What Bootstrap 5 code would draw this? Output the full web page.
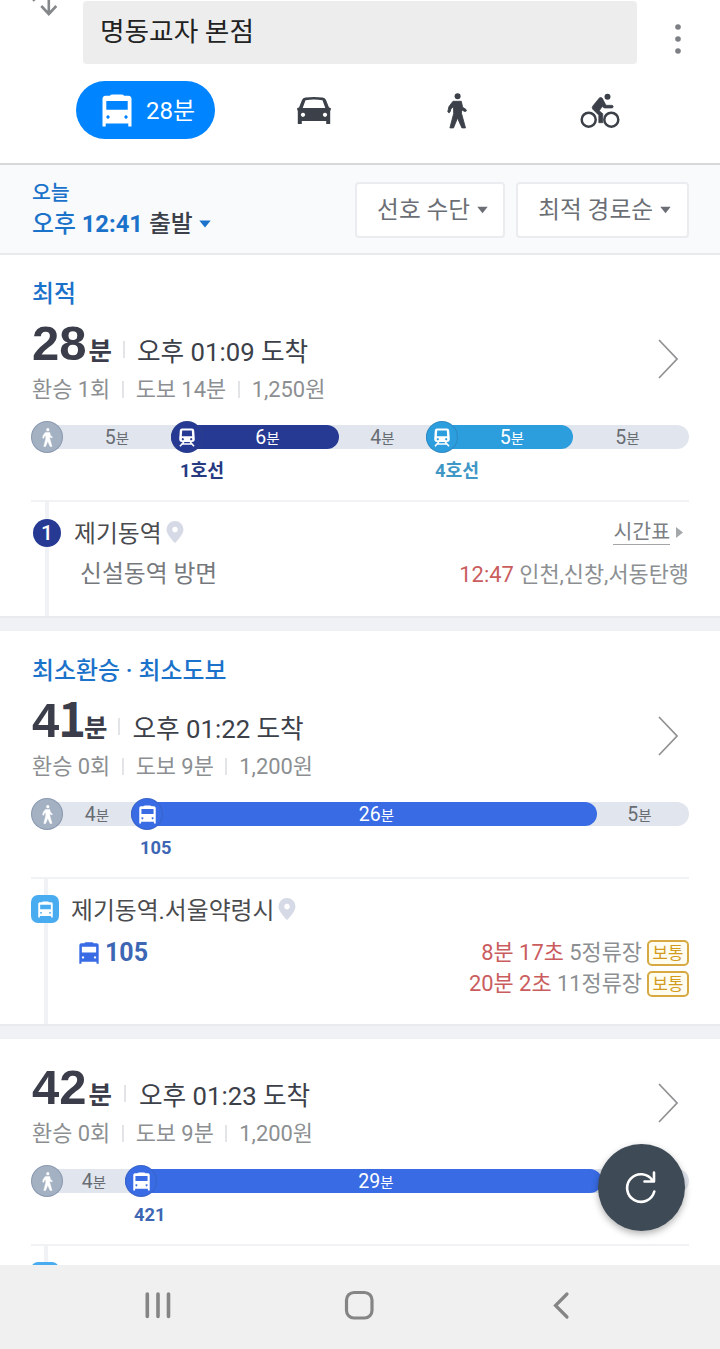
<!DOCTYPE html>
<html lang="ko">
<head>
<meta charset="utf-8">
<meta name="viewport" content="width=device-width, initial-scale=1">
<title>길찾기</title>
<link href="https://cdn.jsdelivr.net/npm/bootstrap@5.3.0/dist/css/bootstrap.min.css" rel="stylesheet">
<style>
body{font-family:Roboto,"Noto Sans CJK KR",sans-serif;color:#3c4049;height:1349px;overflow:hidden;line-height:1;white-space:nowrap}
svg{display:block;flex:none}
.topbar{height:165px;border-bottom:2px solid #d6d8da;flex:none}
.place{width:554px;height:63px;margin:1px 0 0 18px;background:#ededed;border-radius:4px;font-size:26.7px;line-height:62px;padding-left:17px;color:#222}
.dots{margin-left:35px}
.tabs-row{margin:17px 0 0 76px;height:58px}
.mode-on{width:139px;background:#0084ff;border-radius:29px;color:#fff;font-size:24px;margin-right:27px;padding:2px 0 0 26px;gap:14px}
.mode-on svg{margin-top:-2px}
.mode{width:143px;padding-top:1px;color:#3c4149}
.filters{height:90px;background:#f8fafc;border-bottom:2px solid #e8eaed;padding:2px 31px 0 32px;flex:none}
.depart{font-size:23.8px;font-weight:500;line-height:31px;margin-top:-3px}
.depart svg{margin-left:6px}
.blue{color:#1b72ca}
.today{font-size:20.5px}
.pick{height:56px;border:2px solid #eaecef;border-radius:4px;background:#fff;font-size:23.7px;color:#6b6f75;padding:0 15px 0 20px;gap:7px}
.pick span{padding-top:2px}
.pick + .pick{margin-left:11px;padding-right:16px}
.route{padding:22px 31px 0;background:#fff}
.route-last{padding-top:14px}
.kind{height:32px;line-height:35px;font-size:23.9px;font-weight:500;color:#1b72ca;padding-left:1px}
.total{height:64px;padding:0 11px 0 1px}
.mins{font:700 49px/52px "Liberation Sans",sans-serif;color:#3b3e4a;padding-top:3px}
.mins .one{font-family:"Noto Sans CJK KR",sans-serif;font-size:47px;line-height:1;margin:0 -4px 0 -1px}
.mins small{font-family:"Noto Sans CJK KR",sans-serif;font-size:25.5px;line-height:1;margin-left:2px}
.total .vbar{margin:16px 12px 0 11px}
.route-last .total .vbar{margin:16px 13px 0 12px}
.arrive{font-size:25.7px;line-height:32px;padding-top:21px}
.total svg{margin-top:36px}
.vbar{width:2px;height:17px;background:#e2e4e7}
.summary{height:32px;font-size:21.9px;color:#8c8f92;padding:2px 0 0 1px}
.summary .vbar{margin:-2px 12px 0 11.5px}
.track{position:relative;margin-top:16px;height:64px;padding-bottom:15px;box-sizing:content-box;border-bottom:2px solid #f0f2f4}
.track::before{content:"";position:absolute;left:8px;right:0;top:4px;height:24px;border-radius:12px;background:#e1e5ed}
.seg{position:relative;flex:none}
.leg{height:24px;margin:4px 0;border-radius:0 12px 12px 0;font-size:19.5px;line-height:25px;color:#686c73}
.leg small{font-size:14.5px}
.leg span{flex:1;text-align:center}
.ride .leg{color:#fff;background:var(--c);border-radius:12px}
.ride .leg span{padding-right:7px}
.tail .leg span{padding-right:7px}
.dot{width:32px;height:32px;border-radius:50%;border:1px solid rgba(60,80,120,.25);background:var(--c,#a3b1c3);color:#fff;margin:-4px 0;display:flex;align-items:center;justify-content:center;flex:none}
.line-name{font-size:18.3px;font-weight:700;line-height:35px;height:32px;color:var(--t);padding-left:9px}
.l1{--c:#263a94;--t:#263a82}
.l4{--c:#2c9ddd;--t:#3f97c6}
.bus{--c:#386be4;--t:#3d66b4}
.stop{position:relative;padding-top:8px}
.stop::before{content:"";position:absolute;left:14px;top:0;bottom:0;width:4px;background:#f0f2f5}
.stop-bus::before{left:13px}
.stop-row{position:relative;height:44px;font-size:23.8px;color:#4a4b4e}
.stop-row .name{padding-top:5px}
.stop-row .name + svg{margin-left:4px}
.num{width:28px;height:28px;border-radius:50%;background:#263a94;color:#fff;font-size:21px;font-weight:500;line-height:29px;text-align:center;margin:1px 13px 0 2px}
.sq{width:28px;height:28px;border-radius:7px;background:#4aacf0;color:#fff;margin-right:12px;display:flex;align-items:center;justify-content:center}
.info{line-height:31px;font-size:21.9px;color:#8c8f92;padding:5px 0 0 49px}
.stop-bus .info{padding:6px 0 0 48px}
.toward{font-size:23.8px;color:#75787c}
.red{color:#ca5c5e}
.tt{font-size:20.5px;line-height:24px;border-bottom:1px solid #a3a5a8;color:#7c7f83}
.tt-arrow{margin:0 5px 0 6px}
.crowd{width:42px;height:26px;border:2px solid #d7a943;border-radius:5px;background:#fffdf0;color:#d39b1e;font-size:16.8px;line-height:23px;text-align:center;margin-left:5px}
.busno{font-size:25px;font-weight:700;color:#3d66b4;gap:6px}
.divider{height:15px;background:#f0f1f4;border-top:2px solid #e8eaed}
.divider-first{margin-bottom:1px}
.fab{position:absolute;left:598px;top:1144px;width:87px;height:87px;border-radius:50%;background:#3e4a56;box-shadow:0 3px 7px rgba(0,0,0,.3)}
.sysnav{position:absolute;left:0;right:0;bottom:0;height:84px;background:#f0f0f0;padding:0 57px 4px}
</style>
</head>
<body class="bg-white position-relative">
<svg width="0" height="0" class="position-absolute">
  <symbol id="bus" viewBox="0 0 30 33"><path fill="currentColor" fill-rule="evenodd" d="M8 1.800Q8 .5 11 .5h8q3 0 3 1.300h4.500Q29.500 2 29.500 5v27.500h-3.200v-3H3.700v3H.5V5Q.5 2 3.500 1.800zM4.300 7v8.800h21.400V7zM6 21.300a1.700 1.700 0 1 0 .01 0zM24 21.300a1.700 1.700 0 1 0 .01 0z"/></symbol>
  <symbol id="walk" viewBox="0 0 20 36"><circle cx="10.600" cy="3.200" r="3" fill="currentColor"/><path fill="currentColor" stroke="currentColor" stroke-width=".9" stroke-linejoin="round" d="M6 8.300h8.300l1.300 5.900 3.400 2.300q.8.800.2 1.600-.6.700-1.500.4L14.500 16.800v3.700l4 14.400h-3.600L10.500 25 6.500 34.900H2.900L6.700 20.500 6.500 13.500l-2.600 2.400-.9 3.200q-.6.800-1.400.5-1-.4-.7-1.400l1.100-4.700z"/></symbol>
  <symbol id="train" viewBox="0 0 18 19"><path fill="currentColor" fill-rule="evenodd" d="M4 .5h10Q16 .5 16.200 2.500l.6 8.500q0 3-2.800 3H4Q1.200 14 1.200 11l.6-8.500Q2 .5 4 .5zM4.200 2.600l-.4 5.700h10.400l-.4-5.700zM4.800 10.100a1.100 1.100 0 1 0 .01 0zM13.200 10.100a1.100 1.100 0 1 0 .01 0z"/><path d="M5.800 14 2 18.200M12.200 14l3.800 4.200M4.500 16h9" fill="none" stroke="currentColor" stroke-width="1.700"/></symbol>
  <symbol id="pin" viewBox="0 0 18 22"><path fill="#d6dae6" fill-rule="evenodd" d="M9 0a8.500 8.500 0 0 1 8.500 8.500C17.500 14 9 22 9 22S.5 14 .5 8.500A8.500 8.500 0 0 1 9 0zM9 5.800a2.800 2.800 0 1 0 .01 0z"/></symbol>
  <symbol id="next" viewBox="0 0 20 40"><path d="M1 1l18 19L1 39" fill="none" stroke="#8f9193" stroke-width="1.700"/></symbol>
  <symbol id="down" viewBox="0 0 12 8"><path d="M.3.500h11.400L6 7.500z" fill="currentColor"/></symbol>
</svg>

<header class="topbar">
  <div class="d-flex">
    <svg width="65" height="64" fill="none" stroke="#85888b" stroke-width="2.600"><path d="M48.800-3v17M41.300 6l7.500 8 7.500-8M32.500-2l2 3"/></svg>
    <div class="place">명동교자 본점</div>
    <svg class="dots" width="12" height="64" fill="#7c7f83"><circle cx="6" cy="27" r="2.800"/><circle cx="6" cy="39" r="2.800"/><circle cx="6" cy="51" r="2.800"/></svg>
  </div>
  <nav class="tabs-row d-flex">
    <div class="mode-on d-flex align-items-center"><svg width="30" height="33"><use href="#bus"/></svg><span>28분</span></div>
    <div class="mode d-flex align-items-center justify-content-center"><svg width="34" height="28" viewBox="0 0 34 28"><path fill="#3c4149" fill-rule="evenodd" d="M8.500.6Q17-.5 25.500.6q2.700.3 3.500 2.400l3 7.500 1.800.4v2.300l-.6.400v13.400h-4V24H4.800v3H.8V13.600l-.6-.4v-2.300l1.800-.4L5 3q.8-2.100 3.500-2.400zM8.500 3.200 5.700 11h22.600L25.500 3.200Q17 2 8.500 3.200zM6 15.700a2.100 2.100 0 1 0 .01 0zM28 15.700a2.100 2.100 0 1 0 .01 0z"/></svg></div>
    <div class="mode d-flex align-items-center justify-content-center"><svg width="20" height="36"><use href="#walk"/></svg></div>
    <div class="mode d-flex align-items-center justify-content-center"><svg width="40" height="36" viewBox="0 0 40 36"><g fill="none" stroke="#3c4149" stroke-width="2.500"><circle cx="8.700" cy="26.700" r="7"/><circle cx="31.300" cy="26.700" r="7"/></g><circle cx="27.500" cy="3.800" r="3" fill="#3c4149"/><path fill="#3c4149" stroke="#3c4149" stroke-width=".7" d="M19.500 4.800q1.500-.8 2.700.3l3.800 7.200h6q1.200.3 1.200 1.400T32 15h-7.500l-2.300-1.400-2.900 4.200 3.500 3v8.900h-4v-7.500l-6-6q-1.300-1.500 0-3.200z"/></svg></div>
  </nav>
</header>

<section class="filters d-flex align-items-center">
  <div class="depart me-auto">
    <div class="today blue">오늘</div>
    <div class="d-flex align-items-center"><span class="blue">오후 <b>12:41</b></span>&nbsp;<span>출발</span><svg class="blue" width="12" height="8"><use href="#down"/></svg></div>
  </div>
  <div class="pick d-flex align-items-center"><span>선호 수단</span><svg width="11" height="8"><use href="#down"/></svg></div>
  <div class="pick d-flex align-items-center"><span>최적 경로순</span><svg width="11" height="8"><use href="#down"/></svg></div>
</section>

<main>
  <article class="route">
    <div class="kind">최적</div>
    <div class="total d-flex align-items-center">
      <span class="mins">28<small>분</small></span><i class="vbar"></i><span class="arrive">오후 01:09 도착</span>
      <svg class="ms-auto" width="20" height="40"><use href="#next"/></svg>
    </div>
    <div class="summary d-flex align-items-center">환승 1회<i class="vbar"></i>도보 14분<i class="vbar"></i>1,250원</div>
    <div class="track d-flex">
      <div class="seg" style="width:140px"><div class="leg d-flex"><i class="dot"><svg width="11" height="19"><use href="#walk"/></svg></i><span>5<small>분</small></span></div></div>
      <div class="seg ride l1" style="width:168px"><div class="leg d-flex"><i class="dot"><svg width="18" height="19"><use href="#train"/></svg></i><span>6<small>분</small></span></div><div class="line-name">1호선</div></div>
      <div class="seg" style="width:87px"><div class="leg d-flex"><span>4<small>분</small></span></div></div>
      <div class="seg ride l4" style="width:147px"><div class="leg d-flex"><i class="dot"><svg width="18" height="19"><use href="#train"/></svg></i><span>5<small>분</small></span></div><div class="line-name">4호선</div></div>
      <div class="seg tail" style="width:116px"><div class="leg d-flex"><span>5<small>분</small></span></div></div>
    </div>
    <div class="stop" style="height:114px">
      <div class="stop-row d-flex align-items-center"><span class="num">1</span><span class="name">제기동역</span><svg width="18" height="22"><use href="#pin"/></svg><span class="tt ms-auto">시간표</span><svg class="tt-arrow" width="8" height="11"><path d="M0 0l7 5.500L0 11z" fill="#a5a8ab"/></svg></div>
      <div class="info d-flex"><span class="toward">신설동역 방면</span><span class="ms-auto"><span class="red">12:47</span> 인천,신창,서동탄행</span></div>
    </div>
  </article>
  <div class="divider divider-first"></div>

  <article class="route">
    <div class="kind">최소환승 · 최소도보</div>
    <div class="total d-flex align-items-center">
      <span class="mins">4<span class="one">1</span><small>분</small></span><i class="vbar"></i><span class="arrive">오후 01:22 도착</span>
      <svg class="ms-auto" width="20" height="40"><use href="#next"/></svg>
    </div>
    <div class="summary d-flex align-items-center">환승 0회<i class="vbar"></i>도보 9분<i class="vbar"></i>1,200원</div>
    <div class="track d-flex">
      <div class="seg" style="width:100px"><div class="leg d-flex"><i class="dot"><svg width="11" height="19"><use href="#walk"/></svg></i><span>4<small>분</small></span></div></div>
      <div class="seg ride bus" style="width:466px"><div class="leg d-flex"><i class="dot"><svg width="17" height="19"><use href="#bus"/></svg></i><span>26<small>분</small></span></div><div class="line-name">105</div></div>
      <div class="seg tail" style="width:92px"><div class="leg d-flex"><span>5<small>분</small></span></div></div>
    </div>
    <div class="stop stop-bus" style="height:145px">
      <div class="stop-row d-flex align-items-center"><span class="sq"><svg width="15" height="17"><use href="#bus"/></svg></span><span class="name">제기동역.서울약령시</span><svg width="18" height="22"><use href="#pin"/></svg></div>
      <div class="info d-flex justify-content-between">
        <div class="busno d-flex align-items-center align-self-start"><svg width="20" height="22" style="color:#386be4"><use href="#bus"/></svg>105</div>
        <div>
          <div class="d-flex align-items-center justify-content-end"><span class="red">8분 17초</span>&nbsp;5정류장<span class="crowd">보통</span></div>
          <div class="d-flex align-items-center justify-content-end"><span class="red">20분 2초</span>&nbsp;11정류장<span class="crowd">보통</span></div>
        </div>
      </div>
    </div>
  </article>
  <div class="divider"></div>

  <article class="route route-last">
    <div class="total d-flex align-items-center">
      <span class="mins">42<small>분</small></span><i class="vbar"></i><span class="arrive">오후 01:23 도착</span>
      <svg class="ms-auto" width="20" height="40"><use href="#next"/></svg>
    </div>
    <div class="summary d-flex align-items-center">환승 0회<i class="vbar"></i>도보 9분<i class="vbar"></i>1,200원</div>
    <div class="track d-flex">
      <div class="seg" style="width:94px"><div class="leg d-flex"><i class="dot"><svg width="11" height="19"><use href="#walk"/></svg></i><span>4<small>분</small></span></div></div>
      <div class="seg ride bus" style="width:477px"><div class="leg d-flex"><i class="dot"><svg width="17" height="19"><use href="#bus"/></svg></i><span>29<small>분</small></span></div><div class="line-name">421</div></div>
    </div>
    <div class="stop stop-bus"><div class="stop-row d-flex align-items-center"><span class="sq"></span></div></div>
  </article>
</main>

<button class="fab btn p-0 border-0 d-flex align-items-center justify-content-center" aria-label="새로고침"><svg width="34" height="34" viewBox="0 0 34 34" fill="none" stroke="#fff" stroke-width="2.600" stroke-linecap="round" stroke-linejoin="round"><path d="M29.300 20.500A13.800 13.800 0 1 1 27.500 9.500M29 1.500v9h-9.500"/></svg></button>

<nav class="sysnav d-flex align-items-center justify-content-between">
  <svg width="202" height="30" stroke="#858585" stroke-width="3.600" stroke-linecap="round"><path d="M90.300 4v22.500M101 4v22.500M111.500 4v22.500"/></svg>
  <svg width="202" height="30" fill="none" stroke="#858585" stroke-width="3.200"><rect x="87.500" y="2.500" width="25.500" height="25.500" rx="7.500"/></svg>
  <svg width="202" height="30" fill="none" stroke="#858585" stroke-width="3.200" stroke-linecap="round"><path d="M106 4L94.500 15.500 106 27"/></svg>
</nav>
</body>
</html>
